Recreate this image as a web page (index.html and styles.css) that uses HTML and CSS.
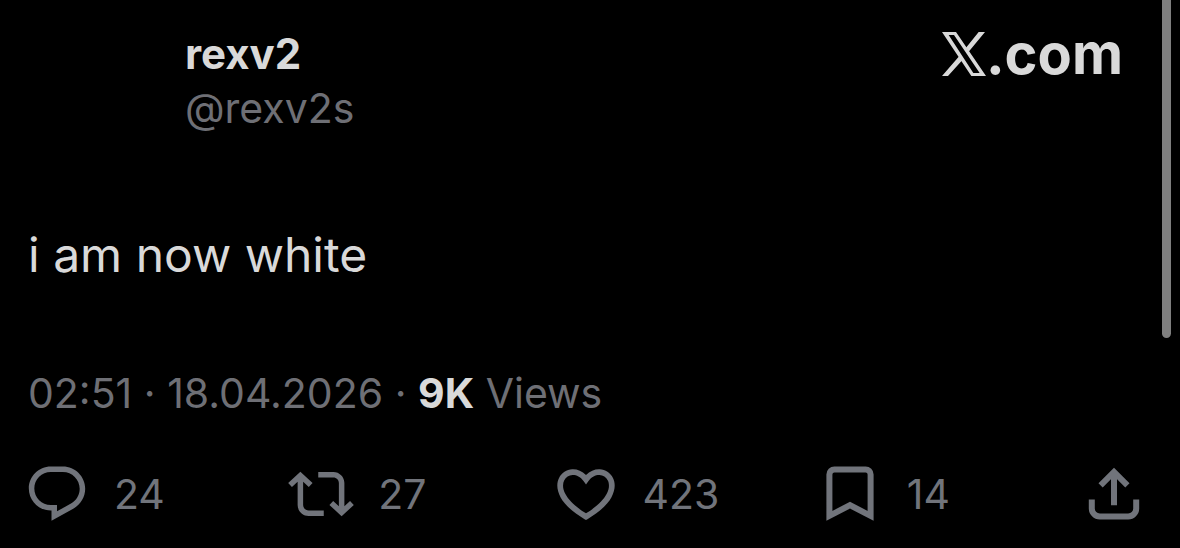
FILE: index.html
```html
<!DOCTYPE html>
<html lang="en">
<head>
    <meta charset="UTF-8">
    <meta name="viewport" content="width=device-width, initial-scale=1.0">
    <title>rexv2 on X</title>
    <link rel="stylesheet" href="styles.css">
</head>
<body>
    <article class="post">
        <header class="post-header">
            <div class="author">
                <div class="name">rexv2</div>
                <div class="handle">@rexv2s</div>
            </div>
            <div class="brand">
                <svg class="logo" viewBox="0 0 132 132" aria-label="X">
                    <path fill-rule="evenodd" d="M0 0H42L132 132H88ZM20 9L94 123H113L36 9Z"/>
                    <path d="M110 0H129L80 59L72 47ZM0 132H18L62 83L54 70Z"/>
                </svg>
                <span>.com</span>
            </div>
        </header>

        <p class="text">i am now white</p>

        <div class="meta">02:51 · 18.04.2026 · <strong>9K</strong> Views</div>

        <div class="actions">
            <button class="action" aria-label="Reply">
                <svg class="icon" viewBox="0 0 24 24"><path d="M1.751 10c0-4.42 3.584-8 8.005-8h4.366c4.49 0 8.129 3.64 8.129 8.13 0 2.96-1.607 5.68-4.196 7.11l-8.054 4.46v-3.69h-.067c-4.49.1-8.183-3.51-8.183-8.01zm8.005-6c-3.317 0-6.005 2.69-6.005 6 0 3.37 2.77 6.08 6.138 6.01l.351-.01h1.761v2.3l5.087-2.81c1.951-1.08 3.163-3.13 3.163-5.36 0-3.39-2.744-6.13-6.129-6.13H9.756z"/></svg>
                <span>24</span>
            </button>
            <button class="action" aria-label="Repost">
                <svg class="icon" viewBox="0 0 24 24"><path d="M4.5 3.88l4.432 4.14-1.364 1.46L5.5 7.55V16c0 1.1.896 2 2 2H13v2H7.5c-2.209 0-4-1.79-4-4V7.55L1.432 9.48.068 8.02 4.5 3.88zM16.5 6H11V4h5.5c2.209 0 4 1.79 4 4v8.45l2.068-1.93 1.364 1.46-4.432 4.14-4.432-4.14 1.364-1.46 2.068 1.93V8c0-1.1-.896-2-2-2z"/></svg>
                <span>27</span>
            </button>
            <button class="action" aria-label="Like">
                <svg class="icon" viewBox="0.5 0.6 23 23"><path d="M16.697 5.5c-1.222-.06-2.679.51-3.89 2.16l-.805 1.09-.806-1.09C9.984 6.01 8.526 5.44 7.304 5.5c-1.243.07-2.349.78-2.91 1.91-.552 1.12-.633 2.78.479 4.82 1.074 1.97 3.257 4.27 7.129 6.61 3.87-2.34 6.052-4.64 7.126-6.61 1.111-2.04 1.03-3.7.477-4.82-.561-1.13-1.666-1.84-2.908-1.91zm4.187 7.69c-1.351 2.48-4.001 5.12-8.379 7.67l-.503.3-.504-.3c-4.379-2.55-7.029-5.19-8.382-7.67-1.36-2.5-1.41-4.86-.514-6.67.887-1.79 2.647-2.91 4.601-3.01 1.651-.09 3.368.56 4.798 2.01 1.429-1.45 3.146-2.1 4.796-2.01 1.954.1 3.714 1.22 4.601 3.01.896 1.81.846 4.17-.514 6.67z"/></svg>
                <span>423</span>
            </button>
            <button class="action" aria-label="Bookmark">
                <svg class="icon line" viewBox="0 0 66 66"><path d="M12.4 54.8V13.4a5 5 0 0 1 5-5h31.2a5 5 0 0 1 5 5v41.4L33 44.2Z"/></svg>
                <span>14</span>
            </button>
            <button class="action" aria-label="Share">
                <svg class="icon line" viewBox="0 0 66 66"><path d="M33 11V44.2M19.6 24.4L33 11L46.4 24.4M10.8 38.5v8.9a8 8 0 0 0 8 8h28.4a8 8 0 0 0 8-8v-8.9"/></svg>
            </button>
        </div>
    </article>
    <div class="scroll-thumb"></div>
</body>
</html>
```

FILE: styles.css
```css
* {
    box-sizing: border-box;
}
body {
    margin: 0;
    background: #000;
    color: #d9d9d9;
    font-family: Inter, "Liberation Sans", sans-serif;
}
.post {
    padding: 27px 33px 0 28px;
}
.post-header {
    display: flex;
    justify-content: space-between;
    align-items: flex-start;
    padding: 0 24px 0 157px;
}
.name,
.handle {
    font-size: 42px;
    line-height: 54px;
}
.name {
    font-weight: 700;
}
.handle,
.meta {
    color: #6e6f75;
}
.handle,
.meta,
.action {
    font-size: 41px;
}
.brand {
    display: flex;
    align-items: center;
    font-size: 56px;
    font-weight: 700;
    line-height: 54px;
}
.logo {
    width: 44px;
    height: 44px;
    fill: currentColor;
}
.text {
    margin: 88px 0 0;
    font-size: 48px;
    line-height: 64px;
}
.meta {
    margin-top: 79px;
    line-height: 54px;
}
.meta strong {
    color: #d9d9d9;
}
.actions {
    display: grid;
    grid-template-columns: repeat(4, 1fr) auto;
    margin: 41px 0 0 -4px;
}
.action {
    display: flex;
    align-items: center;
    gap: 24px;
    padding: 0;
    border: none;
    background: none;
    color: #71747b;
    font-family: inherit;
    cursor: pointer;
}
.icon {
    width: 66px;
    height: 66px;
    fill: currentColor;
}
.line {
    fill: none;
    stroke: currentColor;
    stroke-width: 6;
}
.scroll-thumb {
    position: absolute;
    top: 0;
    right: 9px;
    width: 9px;
    height: 338px;
    border-radius: 0 0 5px 5px;
    background: #7f7f7f;
}
```
